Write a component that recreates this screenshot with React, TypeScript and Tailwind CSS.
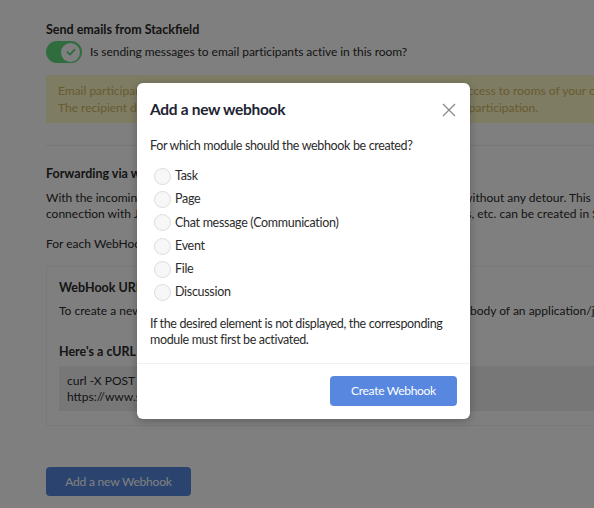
import React from "react";

const font = { fontFamily: "Lato, 'Noto Sans', sans-serif" };

function Radio({ label }: { label: string }) {
  return (
    <div className="flex items-center h-[23.2px]">
      <span className="w-[17px] h-[17px] rounded-full border border-[#dcdcdc] bg-[#f7f7f7] ml-[4px] mr-[4px]" />
      <span className="text-[12.5px] tracking-[-0.3px] text-[#2b2b2b]">{label}</span>
    </div>
  );
}

export default function App() {
  return (
    <div className="relative w-[594px] h-[508px] overflow-hidden bg-white" style={font}>
      {/* underlying page */}
      <div className="w-[760px] pl-[46px] pt-[21px] text-[12px] text-[#2a2a2a] whitespace-nowrap">
        <div className="font-bold text-[12.5px] leading-[18px]">Send emails from Stackfield</div>
        <div className="flex items-center mt-[2px] h-[22px]">
          <div className="w-[36px] h-[22px] rounded-full bg-[#5ed97c] flex items-center justify-end pr-[2px]">
            <div className="w-[19px] h-[19px] rounded-full bg-white flex items-center justify-center">
              <svg width="12" height="12" viewBox="0 0 12 12" fill="none">
                <path d="M2.5 6.2 L5 8.6 L9.6 3.6" stroke="#5ed97c" strokeWidth="1.8" strokeLinecap="round" strokeLinejoin="round" />
              </svg>
            </div>
          </div>
          <span className="ml-[8px] text-[12px] tracking-[-0.05px]">Is sending messages to email participants active in this room?</span>
        </div>
        <div className="mt-[12px] h-[48px] bg-[#fdf8c6] text-[#d2b65e] px-[12px] py-[7px] leading-[17px]">
          <div>Email participants do not have any Stackfield account, and therefore have no access to rooms of your organization.</div>
          <div>The recipient doesn't get any information about the other participants or their participation.</div>
        </div>
        <div className="mt-[22px] border-t border-[#ececec]" />
        <div className="mt-[19px] font-bold text-[12.5px] leading-[18px]">Forwarding via webhook</div>
        <div className="mt-[7px] leading-[16px]">
          <div>With the incoming WebHooks, information from other applications can be sent without any detour. This</div>
          <div>connection with Jira, Zapier and other tools means that all tasks, pages, messages, etc. can be created in Stackfield.</div>
        </div>
        <div className="mt-[14px] leading-[16px]">For each WebHook a separate URL is generated.</div>
        <div className="mt-[14px] border border-[#f2f2f2] pl-[12px] pt-[12px] pb-[13px] h-[160px]">
          <div className="font-bold text-[12.5px] leading-[18px]">WebHook URL</div>
          <div className="mt-[6px] leading-[16px]">To create a new entry, send an HTTP POST request to the URL with the JSON body of an application/json</div>
          <div className="mt-[24px] font-bold text-[12.5px] leading-[18px]">Here's a cURL example:</div>
          <div className="mt-[5px] bg-[#efefef] px-[8px] py-[7px] leading-[16px] h-[45px]">
            <div>curl -X POST -H "Content-Type: application/json" -d</div>
            <div>https://www.stackfield.com/webhook/v1/</div>
          </div>
        </div>
        <div className="mt-[41px] w-[145px] h-[29px] rounded-[4px] bg-[#5787df] text-white flex items-center justify-center text-[12px] tracking-[-0.2px]">
          Add a new Webhook
        </div>
      </div>

      {/* overlay */}
      <div className="absolute inset-0 bg-black/50" />

      {/* modal */}
      <div className="absolute left-[137px] top-[83px] w-[333px] h-[336px] bg-white rounded-[6px] shadow-[0_2px_8px_rgba(0,0,0,0.25)] flex flex-col">
        <div className="flex items-center justify-between pl-[13px] pr-[14px] h-[52px] pt-[1px]">
          <span className="font-bold text-[15.5px] tracking-[-0.3px] text-[#1d2433]">Add a new webhook</span>
          <svg width="14" height="14" viewBox="0 0 14 14">
            <path d="M1 1 L13 13 M13 1 L1 13" stroke="#8a8a8a" strokeWidth="1.3" />
          </svg>
        </div>
        <div className="px-[13px] pt-[1px] text-[12.5px] tracking-[-0.35px] text-[#2b2b2b]">
          <div className="leading-[20px]">For which module should the webhook be created?</div>
          <div className="mt-[9px] flex flex-col">
            <Radio label="Task" />
            <Radio label="Page" />
            <Radio label="Chat message (Communication)" />
            <Radio label="Event" />
            <Radio label="File" />
            <Radio label="Discussion" />
          </div>
          <div className="mt-[12px] leading-[15.5px]">
            If the desired element is not displayed, the corresponding module must first be activated.
          </div>
        </div>
        <div className="mt-[16px] border-t border-[#f0f0f0]" />
        <div className="flex justify-end px-[13px] pt-[12px]">
          <div className="w-[127px] h-[30px] rounded-[4px] bg-[#5787df] text-white text-[12px] tracking-[-0.3px] flex items-center justify-center">
            Create Webhook
          </div>
        </div>
      </div>
    </div>
  );
}
